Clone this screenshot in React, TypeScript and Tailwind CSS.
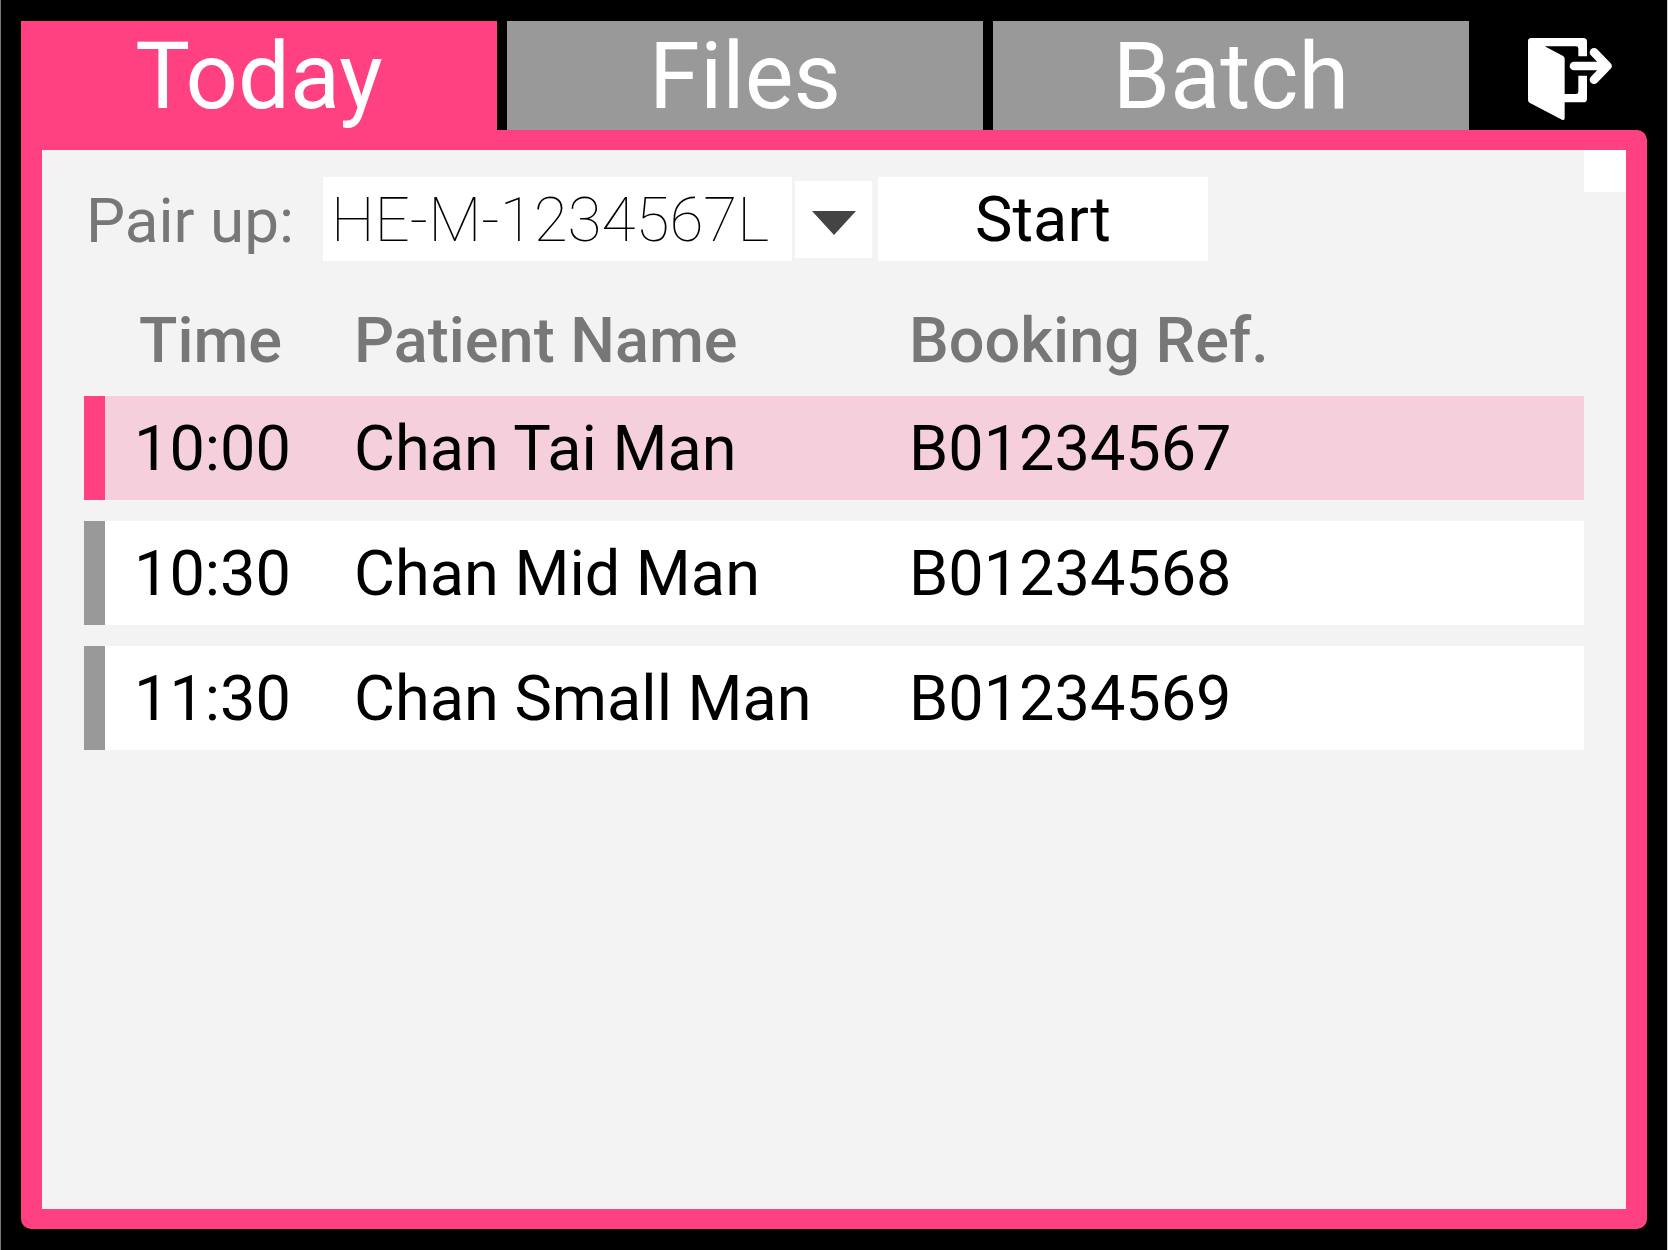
import { useState } from "react";

const tabs = ["Today", "Files", "Batch"];

const bookings = [
  { time: "10:00", name: "Chan Tai Man", ref: "B01234567" },
  { time: "10:30", name: "Chan Mid Man", ref: "B01234568" },
  { time: "11:30", name: "Chan Small Man", ref: "B01234569" },
];

function ExitIcon() {
  return (
    <svg viewBox="84 54 252 246" className="h-[82px] w-[84px]" fill="#fff" aria-hidden="true">
      <path d="M94 54H250Q261 54 261 65V109H235V86Q235 79 228 79H134L188 107Q194 110 194 117V222H228Q235 222 235 215V167H261V236Q261 247 250 247H194V294Q194 302 186 299L90 249Q84 246 84 239V64Q84 54 94 54Z" />
      <path
        d="M222 138H322M282 97L322 138L282 179"
        fill="none"
        stroke="#fff"
        strokeWidth="26"
        strokeLinecap="round"
        strokeLinejoin="round"
      />
    </svg>
  );
}

export default function App() {
  const [tab, setTab] = useState(0);
  const [device, setDevice] = useState("HE-M-1234567L");
  const [selected, setSelected] = useState(0);

  return (
    <div className="flex min-h-screen flex-col border-r border-l border-r-[#cccccc] border-l-[#777777] bg-black px-[20px] py-[21px] font-[Roboto,sans-serif] text-[63px] leading-[72px]">
      <header className="flex">
        <nav className="flex flex-1 gap-[10px]">
          {tabs.map((label, i) => (
            <button
              key={label}
              type="button"
              onClick={() => setTab(i)}
              aria-current={tab === i ? "page" : undefined}
              className={`h-[109px] flex-1 pt-[2px] text-[92px] leading-[107px] text-white ${
                tab === i ? "bg-[#ff4081]" : "bg-[#999999]"
              }`}
            >
              {label}
            </button>
          ))}
        </nav>
        <button
          type="button"
          aria-label="Log out"
          className="flex w-[178px] items-center justify-end pt-[6px] pr-[35px]"
        >
          <ExitIcon />
        </button>
      </header>

      <main className="flex flex-1 flex-col rounded-[10px] rounded-tl-none border-x-[21px] border-y-[20px] border-[#ff4081] bg-[#ff4081]">
        <div className="relative flex-1 bg-[#f3f3f3] px-[42px] pt-[27px]">
          <div className="absolute top-0 right-0 size-[42px] bg-white" />

          <form className="flex items-center" onSubmit={(e) => e.preventDefault()}>
            <label htmlFor="device" className="w-[239px] pt-[4px] pl-[2px] text-[62px] text-[#777777]">
              Pair up:
            </label>
            <input
              id="device"
              value={device}
              onChange={(e) => setDevice(e.target.value)}
              className="h-[84px] w-[469px] bg-white pl-[8px] text-[62px] font-thin text-black outline-none"
            />
            <button
              type="button"
              aria-label="Choose device"
              className="ml-[3px] flex h-[77px] w-[77px] items-center justify-center bg-white pt-[8px]"
            >
              <svg viewBox="0 0 44 24" className="h-[24px] w-[44px]" fill="#444444" aria-hidden="true">
                <path d="M0 0H44L22 24Z" />
              </svg>
            </button>
            <button type="submit" className="ml-[6px] h-[84px] w-[330px] bg-white pt-[2px] text-black">
              Start
            </button>
          </form>

          <table className="mt-[24px] w-full table-fixed border-separate border-spacing-x-0 border-spacing-y-[21px] text-left">
            <colgroup>
              <col className="w-[270px]" />
              <col className="w-[555px]" />
              <col />
            </colgroup>
            <thead>
              <tr className="h-[69px] leading-[69px] text-[#777777]">
                <th className="p-0 pl-[55px] font-medium">Time</th>
                <th className="p-0 font-medium">Patient Name</th>
                <th className="p-0 font-medium">Booking Ref.</th>
              </tr>
            </thead>
            <tbody>
              {bookings.map((b, i) => (
                <tr
                  key={b.ref}
                  onClick={() => setSelected(i)}
                  className={`h-[104px] ${selected === i ? "bg-[#f5cfdc]" : "bg-white"}`}
                >
                  <td
                    className={`border-l-[21px] p-0 pt-[2px] pl-[29px] ${
                      selected === i ? "border-[#ff4081]" : "border-[#999999]"
                    }`}
                  >
                    {b.time}
                  </td>
                  <td className="p-0 pt-[2px]">{b.name}</td>
                  <td className="p-0 pt-[2px]">{b.ref}</td>
                </tr>
              ))}
            </tbody>
          </table>
        </div>
      </main>
    </div>
  );
}
